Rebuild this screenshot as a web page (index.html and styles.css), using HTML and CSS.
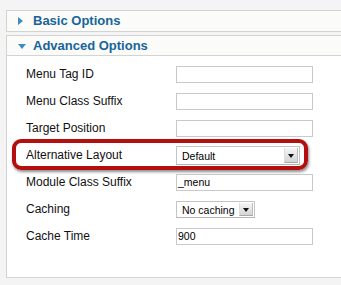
FILE: index.html
```html
<!DOCTYPE html>
<html>
<head>
<meta charset="utf-8">
<link rel="stylesheet" href="styles.css">
</head>
<body>
<div class="wrap">
  <div class="panel">
    <div class="panel-head">
      <span class="tri tri-right"></span>
      <span class="panel-title">Basic Options</span>
    </div>
  </div>
  <div class="panel panel-open">
    <div class="panel-head panel-head-open">
      <span class="tri tri-down"></span>
      <span class="panel-title">Advanced Options</span>
    </div>
    <div class="panel-body">
      <div class="row">
        <label class="lbl">Menu Tag ID</label>
        <div class="field"><span class="input"></span></div>
      </div>
      <div class="row">
        <label class="lbl">Menu Class Suffix</label>
        <div class="field"><span class="input"></span></div>
      </div>
      <div class="row">
        <label class="lbl">Target Position</label>
        <div class="field"><span class="input"></span></div>
      </div>
      <div class="row row-marked">
        <label class="lbl">Alternative Layout</label>
        <div class="field">
          <span class="select select-wide"><span class="select-text">Default</span><span class="select-btn"><span class="select-arrow"></span></span></span>
        </div>
        <span class="highlight"></span>
      </div>
      <div class="row">
        <label class="lbl">Module Class Suffix</label>
        <div class="field"><span class="input">_menu</span></div>
      </div>
      <div class="row">
        <label class="lbl">Caching</label>
        <div class="field">
          <span class="select select-narrow"><span class="select-text">No caching</span><span class="select-btn"><span class="select-arrow"></span></span></span>
        </div>
      </div>
      <div class="row">
        <label class="lbl">Cache Time</label>
        <div class="field"><span class="input">900</span></div>
      </div>
    </div>
  </div>
</div>
</body>
</html>
```

FILE: styles.css
```css
html, body {
  margin: 0;
  padding: 0;
}
body {
  background: #f4f4f4;
  width: 341px;
  height: 285px;
  overflow: hidden;
  font-family: "Liberation Sans", Arial, sans-serif;
}
.wrap {
  padding: 10px 0 0 6px;
}
.panel {
  border: 1px solid #d3d3d3;
  border-right: none;
  background: #fbfbfa;
}
.panel + .panel {
  margin-top: 3px;
}
.panel-head {
  height: 20px;
  display: flex;
  align-items: center;
  padding-left: 11px;
}
.panel-head-open {
  height: 19px;
  border-bottom: 1px solid #d3d3d3;
}
.tri {
  width: 0;
  height: 0;
  display: block;
  margin-right: 7px;
}
.tri-right {
  border-top: 4px solid transparent;
  border-bottom: 4px solid transparent;
  border-left: 5px solid #3d8cc6;
  margin-left: 0;
  margin-right: 10px;
}
.tri-down {
  border-left: 4px solid transparent;
  border-right: 4px solid transparent;
  border-top: 5px solid #3d8cc6;
  margin-top: 1px;
}
.panel-title {
  font-size: 13px;
  font-weight: bold;
  color: #17649a;
  line-height: 20px;
}
.panel-body {
  background: #ffffff;
  padding: 5px 0 27px 19px;
}
.row {
  height: 27px;
  display: flex;
  align-items: center;
  position: relative;
}
.lbl {
  width: 150px;
  font-size: 12px;
  color: #111111;
  line-height: 17px;
}
.field {
  display: flex;
  align-items: center;
}
.input {
  display: block;
  box-sizing: border-box;
  width: 137px;
  height: 17px;
  border: 1px solid #c9c9c9;
  background: #fff;
  font-size: 10.5px;
  line-height: 15px;
  padding-left: 1px;
  color: #000;
}
.select {
  display: flex;
  box-sizing: border-box;
  border: 1px solid #c4c4c4;
  border-bottom-color: #b4b4b4;
  background: #fff;
  align-items: center;
  padding: 1px;
}
.select-wide {
  width: 124px;
  height: 19px;
}
.select-narrow {
  width: 79px;
  height: 17px;
}
.select-text {
  flex: 1;
  font-size: 10.5px;
  color: #000;
  padding-left: 4px;
  line-height: 14px;
}
.select-btn {
  width: 14px;
  align-self: stretch;
  box-sizing: border-box;
  background: linear-gradient(#f6f6f6, #d4d4d4);
  border-left: 1px solid #dedede;
  border-bottom: 1px solid #a8a8a8;
  border-right: 1px solid #bcbcbc;
  display: flex;
  align-items: center;
  justify-content: center;
}
.select-arrow {
  width: 0;
  height: 0;
  border-left: 3px solid transparent;
  border-right: 3px solid transparent;
  border-top: 4px solid #111;
  margin-top: 1px;
}
.highlight {
  position: absolute;
  left: -14px;
  top: -3px;
  width: 296px;
  height: 31px;
  box-sizing: border-box;
  border: 4px solid #b30f0f;
  border-radius: 9px;
  box-shadow: 1px 2px 3px rgba(0, 0, 0, 0.45);
  pointer-events: none;
}
```
